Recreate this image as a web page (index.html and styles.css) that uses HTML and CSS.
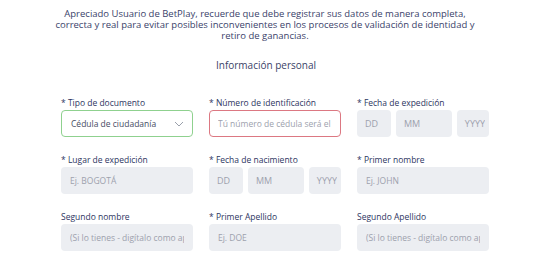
FILE: index.html
```html
<!DOCTYPE html>
<html lang="es">
<head>
    <meta charset="UTF-8">
    <meta name="viewport" content="width=device-width, initial-scale=1.0">
    <title>BetPlay - Registro</title>
    <link rel="stylesheet" href="styles.css">
</head>
<body>
    <div class="registro">
        <p class="aviso">Apreciado Usuario de BetPlay, recuerde que debe registrar sus datos de manera completa, correcta y real para evitar posibles inconvenientes en los procesos de validación de identidad y retiro de ganancias.</p>

        <h2 class="seccion">Información personal</h2>

        <div class="form-grid">
            <div class="campo">
                <label>* Tipo de documento</label>
                <div class="select ok">
                    <span>Cédula de ciudadanía</span>
                    <svg width="10" height="6" viewBox="0 0 10 6">
                        <path d="M1 1l4 4 4-4" fill="none" stroke="#9aa0ab" stroke-width="1"/>
                    </svg>
                </div>
            </div>
            <div class="campo">
                <label>* Número de identificación</label>
                <input class="input error" type="text" placeholder="Tú número de cédula será el usuario">
            </div>
            <div class="campo">
                <label>* Fecha de expedición</label>
                <div class="fecha">
                    <input class="input" type="text" placeholder="DD">
                    <input class="input" type="text" placeholder="MM">
                    <input class="input anio" type="text" placeholder="YYYY">
                </div>
            </div>

            <div class="campo">
                <label>* Lugar de expedición</label>
                <input class="input" type="text" placeholder="Ej. BOGOTÁ">
            </div>
            <div class="campo">
                <label>* Fecha de nacimiento</label>
                <div class="fecha">
                    <input class="input" type="text" placeholder="DD">
                    <input class="input" type="text" placeholder="MM">
                    <input class="input anio" type="text" placeholder="YYYY">
                </div>
            </div>
            <div class="campo">
                <label>* Primer nombre</label>
                <input class="input" type="text" placeholder="Ej. JOHN">
            </div>

            <div class="campo">
                <label>Segundo nombre</label>
                <input class="input" type="text" placeholder="(Si lo tienes - digítalo como aparece en tu documento)">
            </div>
            <div class="campo">
                <label>* Primer Apellido</label>
                <input class="input" type="text" placeholder="Ej. DOE">
            </div>
            <div class="campo">
                <label>Segundo Apellido</label>
                <input class="input" type="text" placeholder="(Si lo tienes - digítalo como aparece en tu documento)">
            </div>
        </div>
    </div>
</body>
</html>
```

FILE: styles.css
```css
* {
    margin: 0;
    padding: 0;
    box-sizing: border-box;
}

body {
    font-family: 'Open Sans', sans-serif;
    background: #ffffff;
    color: #2f3868;
}

.registro {
    width: 540px;
}

.aviso {
    padding: 8px 61px 0 51px;
    font-size: 9.5px;
    line-height: 11px;
    text-align: center;
    color: #3a3f6a;
}

.seccion {
    margin-top: 18px;
    font-size: 10px;
    line-height: 12px;
    font-weight: 400;
    text-align: center;
    padding-right: 8px;
    color: #3b3f68;
}

.form-grid {
    display: grid;
    grid-template-columns: repeat(3, 132px);
    column-gap: 16px;
    row-gap: 18px;
    margin: 27px 0 0 61px;
}

.campo {
    display: flex;
    flex-direction: column;
    gap: 2px;
}

.campo label {
    font-size: 8.5px;
    line-height: 10px;
    color: #2d3561;
}

.input,
.select {
    width: 100%;
    height: 27px;
    border: 1px solid transparent;
    border-radius: 4px;
    background: #eceef2;
    font-family: 'Open Sans', sans-serif;
    font-size: 8.5px;
    color: #4a4f66;
    padding: 0 8px;
    outline: none;
}

.input::placeholder {
    color: #9da1ad;
}

.select {
    display: flex;
    align-items: center;
    justify-content: space-between;
    background: #ffffff;
    padding: 0 8px 0 9px;
}

.select span {
    color: #474c63;
}

.ok {
    border-color: #8fd18f;
}

.error {
    background: #ffffff;
    border-color: #dc7882;
}

.fecha {
    display: grid;
    grid-template-columns: 34px 1fr 32px;
    gap: 5px;
}

.fecha .input {
    padding: 0 7px;
    font-size: 9px;
}

.fecha .anio {
    padding: 0 3px;
    text-align: right;
}
```
